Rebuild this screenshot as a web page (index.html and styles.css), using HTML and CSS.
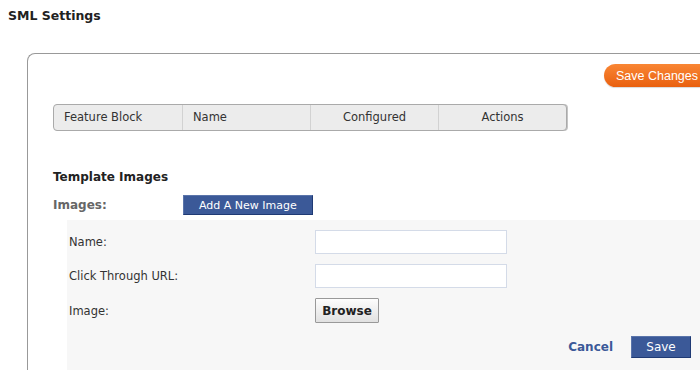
FILE: index.html
```html
<!DOCTYPE html>
<html lang="en">
<head>
    <meta charset="UTF-8">
    <title>SML Settings</title>
    <link rel="stylesheet" href="styles.css">
</head>
<body>
    <h1 class="page-title">SML Settings</h1>

    <div class="settings-box">
        <div class="toolbar">
            <button class="save-changes">Save Changes</button>
        </div>

        <div class="block-table">
            <div class="block-col first">Feature Block</div>
            <div class="block-col first">Name</div>
            <div class="block-col">Configured</div>
            <div class="block-col">Actions</div>
        </div>

        <h2 class="section-title">Template Images</h2>
        <div class="images-row">
            <span class="images-label">Images:</span>
            <button class="blue-button">Add A New Image</button>
        </div>

        <div class="image-form">
            <div class="form-row">
                <label class="form-label">Name:</label>
                <input class="text-input" type="text">
            </div>
            <div class="form-row">
                <label class="form-label">Click Through URL:</label>
                <input class="text-input" type="text">
            </div>
            <div class="form-row">
                <label class="form-label">Image:</label>
                <button class="browse-button">Browse</button>
            </div>
            <div class="form-actions">
                <a class="cancel-link" href="#">Cancel</a>
                <button class="blue-button save-button">Save</button>
            </div>
        </div>
    </div>
</body>
</html>
```

FILE: styles.css
```css
body {
    margin: 0;
    padding: 0;
    overflow: hidden;
    height: 370px;
    font-family: "DejaVu Sans", Arial, sans-serif;
    font-size: 11.5px;
    color: #333;
    background-color: #fff;
}

.page-title {
    margin: 0;
    padding: 8px 0 0 8px;
    height: 53px;
    box-sizing: border-box;
    font-size: 12.5px;
    font-weight: bold;
    color: #222;
}

.settings-box {
    margin-left: 27px;
    width: 650px;
    height: 306px;
    padding: 10px 0 0 25px;
    border: 1px solid #999;
    border-right: none;
    border-bottom: none;
    border-top-left-radius: 8px;
    overflow: hidden;
}

.toolbar {
    display: flex;
    justify-content: flex-end;
    margin-right: -7px;
}

.save-changes {
    flex: none;
    width: 106px;
    height: 23px;
    padding: 0 0 0 12px;
    text-align: left;
    font-family: "Liberation Sans", Arial, sans-serif;
    font-size: 12.5px;
    color: #fff;
    border: none;
    border-radius: 12px;
    background: linear-gradient(#f98634, #e9600f);
    box-shadow: 0 1px 1px rgba(0, 0, 0, 0.15);
}

.block-table {
    display: flex;
    width: 512px;
    height: 25px;
    margin-top: 17px;
    border: 1px solid #aaa;
    border-radius: 4px;
    background-color: #ececec;
    box-shadow: 1px 0 0 #c4c4c4;
}

.block-col {
    flex: none;
    width: 25%;
    box-sizing: border-box;
    line-height: 25px;
    text-align: center;
    border-left: 1px solid #d2d2d2;
}

.block-col:first-child {
    border-left: none;
}

.block-col.first {
    text-align: left;
    padding-left: 10px;
}

.section-title {
    margin: 39px 0 0 0;
    font-size: 12px;
    font-weight: bold;
    color: #222;
}

.images-row {
    display: flex;
    align-items: center;
    margin-top: 11px;
}

.images-label {
    width: 130px;
    font-weight: bold;
    font-size: 12px;
    color: #666;
}

.blue-button {
    height: 20px;
    padding: 0 15px;
    font-family: "DejaVu Sans", Arial, sans-serif;
    font-size: 11px;
    color: #fff;
    background-color: #3b5998;
    border: 1px solid #1f3a74;
    border-top-color: #5a74aa;
    border-left-color: #5a74aa;
}

.image-form {
    width: 622px;
    height: 150px;
    margin: 5px 0 0 14px;
    padding: 10px 16px 0 2px;
    background-color: #f7f7f7;
}

.form-row {
    display: flex;
    align-items: center;
    margin-bottom: 10px;
}

.form-label {
    width: 246px;
}

.text-input {
    width: 192px;
    height: 24px;
    box-sizing: border-box;
    margin: 0;
    border: 1px solid #d4dbe8;
    background-color: #fff;
}

.browse-button {
    width: 64px;
    height: 25px;
    margin: 0;
    padding: 0;
    font-family: "DejaVu Sans", Arial, sans-serif;
    font-size: 12px;
    font-weight: bold;
    color: #222;
    border: 1px solid #999;
    border-radius: 1px;
    background: linear-gradient(#fdfdfd, #e1e1e1);
}

.form-actions {
    display: flex;
    align-items: center;
    justify-content: flex-end;
    margin-top: 13px;
}

.cancel-link {
    margin-right: 18px;
    font-weight: bold;
    font-size: 12px;
    color: #3b5998;
    text-decoration: none;
}

.save-button {
    width: 60px;
    height: 22px;
    padding: 0;
    font-size: 12px;
}
```
